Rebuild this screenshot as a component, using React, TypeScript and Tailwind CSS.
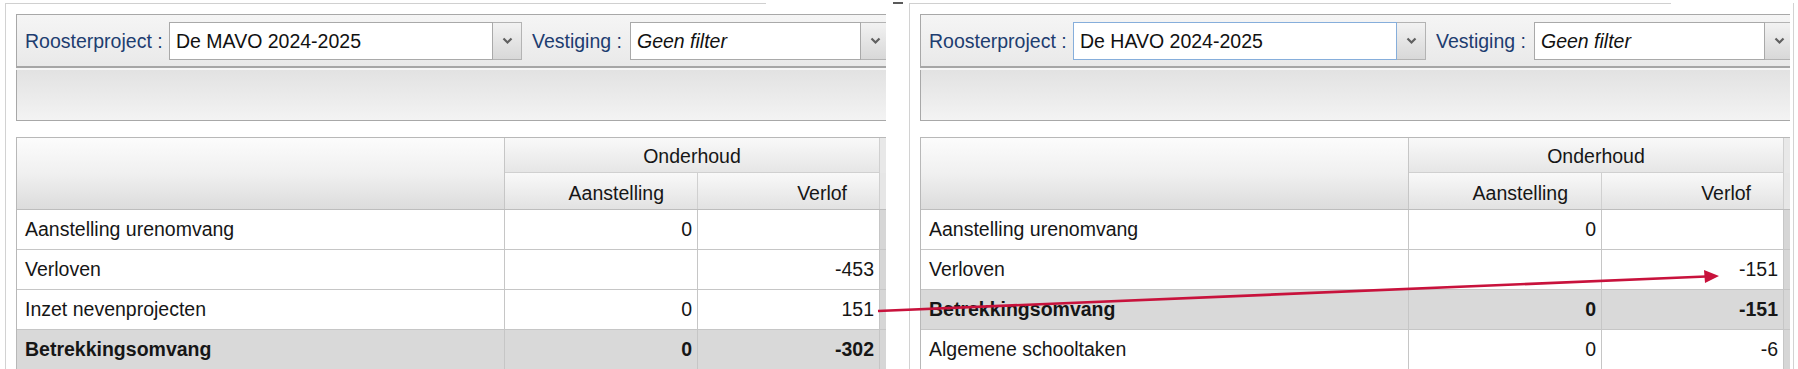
import React from "react";

type Row = { label: string; a: string; v: string; total?: boolean };

const rowsMavo: Row[] = [
  { label: "Aanstelling urenomvang", a: "0", v: "" },
  { label: "Verloven", a: "", v: "-453" },
  { label: "Inzet nevenprojecten", a: "0", v: "151" },
  { label: "Betrekkingsomvang", a: "0", v: "-302", total: true },
];

const rowsHavo: Row[] = [
  { label: "Aanstelling urenomvang", a: "0", v: "" },
  { label: "Verloven", a: "", v: "-151" },
  { label: "Betrekkingsomvang", a: "0", v: "-151", total: true },
  { label: "Algemene schooltaken", a: "0", v: "-6" },
];

function Chevron() {
  return (
    <svg width="11" height="8" viewBox="0 0 11 8">
      <path d="M1.5 1.5 L5.5 5.5 L9.5 1.5" fill="none" stroke="#606060" strokeWidth="2.2" />
    </svg>
  );
}

function Select({
  value,
  italic,
  focused,
  width,
}: {
  value: string;
  italic?: boolean;
  focused?: boolean;
  width: string;
}) {
  return (
    <div className={`flex h-[38px] shrink-0 ${width}`}>
      <div
        className={`flex flex-1 items-center bg-white pl-[6px] pt-[2px] border ${
          focused ? "border-[#86aedb]" : "border-[#a9a9a9]"
        } ${italic ? "italic" : ""} text-[#111]`}
      >
        {value}
      </div>
      <div className="flex w-[29px] items-center justify-center border border-l-0 border-[#b3b3b3] bg-linear-to-b from-[#f2f2f2] to-[#d8d8d8]">
        <Chevron />
      </div>
    </div>
  );
}

function Toolbar({ project, focused }: { project: string; focused?: boolean }) {
  return (
    <div className="w-[870px] overflow-hidden">
      <div className="flex h-[52px] items-center border-t border-l border-[#a8a8a8] bg-linear-to-b from-[#f5f5f5] to-[#e9e9e9] pl-[8px] pt-[1px] whitespace-nowrap">
        <span className="w-[144px] shrink-0 pt-[2px] text-[#1d3d70]">Roosterproject :</span>
        <Select value={project} focused={focused} width="w-[353px]" />
        <span className="ml-[10px] w-[98px] shrink-0 pt-[2px] text-[#1d3d70]">Vestiging :</span>
        <Select value="Geen filter" italic width="w-[260px]" />
      </div>
      <div className="h-[2px] bg-[#a6a6a6]" />
      <div className="h-[2px] bg-[#f6f6f6]" />
      <div className="h-[51px] border-b border-l border-[#a8a8a8] bg-linear-to-b from-[#e2e2e2] to-[#f3f3f3]" />
    </div>
  );
}

function DataRow({ row }: { row: Row }) {
  const bg = row.total ? "bg-[#d9d9d9] font-bold" : "bg-white";
  return (
    <div className={`flex h-[40px] border-b border-[#c6c6c6] ${bg}`}>
      <div className="flex w-[488px] items-center border-r border-[#c6c6c6] pl-[8px] pt-[1px]">{row.label}</div>
      <div className="flex w-[193px] items-center justify-end border-r border-[#c6c6c6] pr-[5px] pt-[1px]">{row.a}</div>
      <div className="flex w-[181px] items-center justify-end pr-[5px] pt-[1px]">{row.v}</div>
      <div className="w-[7px] border-l border-[#c6c6c6] bg-[#d6d6d6]" />
    </div>
  );
}

function Grid({ rows }: { rows: Row[] }) {
  return (
    <div className="mt-[16px] w-[870px] overflow-hidden border-t border-l border-[#b8b8b8] text-[#161616]">
      <div className="flex h-[72px] border-b border-[#bdbdbd]">
        <div className="w-[488px] border-r border-[#c6c6c6] bg-linear-to-b from-[#fcfcfc] via-[#f0f0f0] to-[#dcdcdc]" />
        <div className="flex flex-col">
          <div className="flex h-[35px]">
            <div className="flex w-[374px] items-center justify-center border-b border-[#d0d0d0] bg-linear-to-b from-[#f9f9f9] to-[#e6e6e6] pt-[3px]">
              Onderhoud
            </div>
            <div className="w-[7px] border-l border-[#d0d0d0] bg-[#e8e8e8]" />
          </div>
          <div className="flex h-[36px]">
            <div className="flex w-[193px] items-center justify-end border-r border-[#d0d0d0] bg-linear-to-b from-[#f9f9f9] to-[#e2e2e2] pr-[33px] pt-[6px]">
              Aanstelling
            </div>
            <div className="flex w-[181px] items-center justify-end bg-linear-to-b from-[#f9f9f9] to-[#e2e2e2] pr-[32px] pt-[6px]">
              Verlof
            </div>
            <div className="w-[7px] border-l border-[#d0d0d0] bg-[#e6e6e6]" />
          </div>
        </div>
      </div>
      {rows.map((r) => (
        <DataRow key={r.label} row={r} />
      ))}
    </div>
  );
}

function Panel({
  project,
  rows,
  focused,
  topLine,
  rightEdge,
}: {
  project: string;
  rows: Row[];
  focused?: boolean;
  topLine: string;
  rightEdge?: boolean;
}) {
  return (
    <div className="w-[904px] shrink-0 pl-[5px] pt-[3px]">
      <div className={`h-[366px] border-l border-[#d2d2d2] ${rightEdge ? "w-[885px] border-r" : ""}`}>
        <div className={`h-px bg-[#d0d0d0] ${topLine}`} />
        <div className="pl-[10px] pt-[10px]">
          <Toolbar project={project} focused={focused} />
          <Grid rows={rows} />
        </div>
      </div>
    </div>
  );
}

export default function App() {
  return (
    <div className="relative h-[369px] w-[1798px] overflow-hidden bg-white font-['Liberation_Sans',Arial,sans-serif] text-[19.5px] leading-none">
      <div className="flex">
        <Panel project="De MAVO 2024-2025" rows={rowsMavo} topLine="w-[760px]" />
        <Panel project="De HAVO 2024-2025" rows={rowsHavo} focused topLine="w-[761px]" rightEdge />
      </div>

      {/* tick between the two screenshots */}
      <div className="absolute left-[893px] top-[2px] h-[2px] w-[10px] bg-[#5a5a5a]" />

      {/* red arrow linking the values */}
      <svg className="pointer-events-none absolute inset-0" width="1798" height="369" viewBox="0 0 1798 369">
        <line x1="878" y1="311" x2="1706" y2="276.5" stroke="#c8123c" strokeWidth="2.6" />
        <polygon points="1719,276 1704,270 1705,283" fill="#c8123c" />
      </svg>
    </div>
  );
}
